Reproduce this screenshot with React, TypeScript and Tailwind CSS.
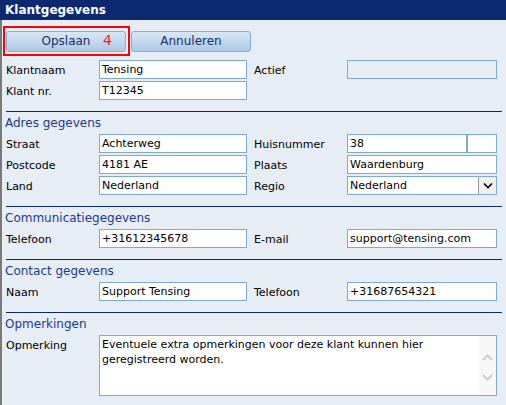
import React from "react";

const FONT = { fontFamily: '"DejaVu Sans", Verdana, sans-serif' };

function Field({ value, className = "" }: { value: string; className?: string }) {
  return (
    <div
      className={`h-[19px] border border-[#7ea9d6] bg-white px-[2px] text-[11px] leading-[17px] text-black whitespace-nowrap overflow-hidden ${className}`}
    >
      {value}
    </div>
  );
}

function Label({ text }: { text: string }) {
  return <div className="w-[93px] shrink-0 text-[11px] leading-[19px] pt-[1px] text-black">{text}</div>;
}

function Section({ title }: { title: string }) {
  return (
    <div className="mt-[9px]">
      <div className="mx-[4px] h-px bg-[#0b2870]" />
      <div className="px-[3px] pt-[2px] h-[22px] text-[12px] leading-[19px] text-[#1c3a8c]">{title}</div>
    </div>
  );
}

function Row({ children }: { children: React.ReactNode }) {
  return <div className="flex items-start pl-[4px] h-[21px]">{children}</div>;
}

const btn =
  "w-[120px] h-[21px] rounded-[3px] border border-[#86aed6] bg-gradient-to-b from-[#d9e7f5] to-[#adc9e6] text-[12px] leading-[19px] text-[#1f2d66]";

export default function App() {
  return (
    <div className="w-[506px] h-[405px] bg-[#e6edf5] overflow-hidden" style={FONT}>
      <div className="h-[20px] bg-[#0b2870] px-[5px] text-[12px] font-bold leading-[20px] text-white">
        Klantgegevens
      </div>
      <div className="h-[385px] border-l-2 border-[#7a7a7a]">
        <div className="pl-[1px] pt-[6px]">
          <div className="flex items-center gap-[1px]">
            <div className="w-[127px] h-[30px] border-2 border-[#ff0000] flex items-center pl-[1px]">
              <button className={`${btn} flex items-center justify-center relative`}>
                <span>Opslaan</span>
                <span className="absolute left-[96px] top-[-1px] text-[14px] text-[#ff1a1a]">4</span>
              </button>
            </div>
            <button className={btn}>Annuleren</button>
          </div>
        </div>
        <div className="mt-[4px]">
          <Row>
            <Label text="Klantnaam" />
            <Field value="Tensing" className="w-[148px]" />
            <div className="w-[7px]" />
            <Label text="Actief" />
            <div className="w-[150px] h-[19px] border border-[#7ea9d6] bg-[#e6edf5]" />
          </Row>
          <Row>
            <Label text="Klant nr." />
            <Field value="T12345" className="w-[148px]" />
          </Row>
        </div>

        <Section title="Adres gegevens" />
        <Row>
          <Label text="Straat" />
          <Field value="Achterweg" className="w-[148px]" />
          <div className="w-[7px]" />
          <Label text="Huisnummer" />
          <Field value="38" className="w-[120px]" />
          <Field value="" className="w-[30px]" />
        </Row>
        <Row>
          <Label text="Postcode" />
          <Field value="4181 AE" className="w-[148px]" />
          <div className="w-[7px]" />
          <Label text="Plaats" />
          <Field value="Waardenburg" className="w-[150px]" />
        </Row>
        <Row>
          <Label text="Land" />
          <Field value="Nederland" className="w-[148px]" />
          <div className="w-[7px]" />
          <Label text="Regio" />
          <div className="w-[150px] h-[19px] border border-[#7ea9d6] bg-white flex">
            <div className="flex-1 px-[2px] text-[11px] leading-[17px]">Nederland</div>
            <div className="w-[18px] h-[17px] bg-[#f0f0f0] border-l border-[#9a9a9a] flex items-center justify-center">
              <svg width="10" height="7" viewBox="0 0 10 7">
                <path d="M1 1.5 L5 5.5 L9 1.5" stroke="#000" strokeWidth="1.6" fill="none" />
              </svg>
            </div>
          </div>
        </Row>

        <Section title="Communicatiegegevens" />
        <Row>
          <Label text="Telefoon" />
          <Field value="+31612345678" className="w-[148px]" />
          <div className="w-[7px]" />
          <Label text="E-mail" />
          <Field value="support@tensing.com" className="w-[150px]" />
        </Row>

        <Section title="Contact gegevens" />
        <Row>
          <Label text="Naam" />
          <Field value="Support Tensing" className="w-[148px]" />
          <div className="w-[7px]" />
          <Label text="Telefoon" />
          <Field value="+31687654321" className="w-[150px]" />
        </Row>

        <Section title="Opmerkingen" />
        <div className="flex items-start pl-[4px]">
          <Label text="Opmerking" />
          <div className="w-[398px] h-[61px] border border-[#7ea9d6] bg-white flex">
            <div className="flex-1 px-[2px] pt-[1px] text-[11px] leading-[15px] text-black">
              Eventuele extra opmerkingen voor deze klant kunnen hier geregistreerd worden.
            </div>
            <div className="w-[17px] bg-[#f7f7f7] flex flex-col items-center pt-[18px] gap-[13px]">
              <svg width="11" height="7" viewBox="0 0 11 7">
                <path d="M1 6 L5.5 1.5 L10 6" stroke="#c4c4c4" strokeWidth="1.6" fill="none" />
              </svg>
              <svg width="11" height="7" viewBox="0 0 11 7">
                <path d="M1 1 L5.5 5.5 L10 1" stroke="#c4c4c4" strokeWidth="1.6" fill="none" />
              </svg>
            </div>
          </div>
        </div>
      </div>
    </div>
  );
}
